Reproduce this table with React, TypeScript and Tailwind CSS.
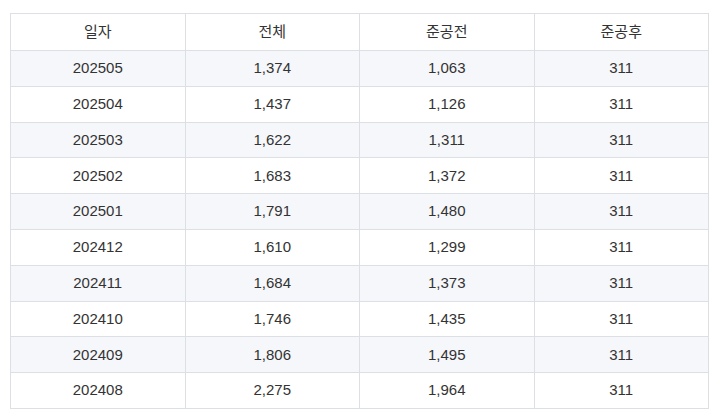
const rows = [
  ["202505", "1,374", "1,063", "311"],
  ["202504", "1,437", "1,126", "311"],
  ["202503", "1,622", "1,311", "311"],
  ["202502", "1,683", "1,372", "311"],
  ["202501", "1,791", "1,480", "311"],
  ["202412", "1,610", "1,299", "311"],
  ["202411", "1,684", "1,373", "311"],
  ["202410", "1,746", "1,435", "311"],
  ["202409", "1,806", "1,495", "311"],
  ["202408", "2,275", "1,964", "311"],
];

const headers = ["일자", "전체", "준공전", "준공후"];

export default function App() {
  return (
    <div className="min-h-[417px] bg-white pl-[10px] pt-[13px] font-['Liberation_Sans','Noto_Sans_CJK_KR',sans-serif] text-[15px] text-[#333]">
      <table className="w-[699px] table-fixed border-collapse border border-[#dcdfe3]">
        <thead>
          <tr className="h-[37px] bg-white">
            {headers.map((h) => (
              <th key={h} className="border border-[#dcdfe3] p-0 text-center font-normal">
                {h}
              </th>
            ))}
          </tr>
        </thead>
        <tbody>
          {rows.map((r, i) => (
            <tr key={r[0]} className={i % 2 === 0 ? "h-[35.8px] bg-[#f6f7fb]" : "h-[35.8px] bg-white"}>
              {r.map((c, j) => (
                <td key={j} className="border border-[#dcdfe3] p-0 text-center">
                  {c}
                </td>
              ))}
            </tr>
          ))}
        </tbody>
      </table>
    </div>
  );
}
